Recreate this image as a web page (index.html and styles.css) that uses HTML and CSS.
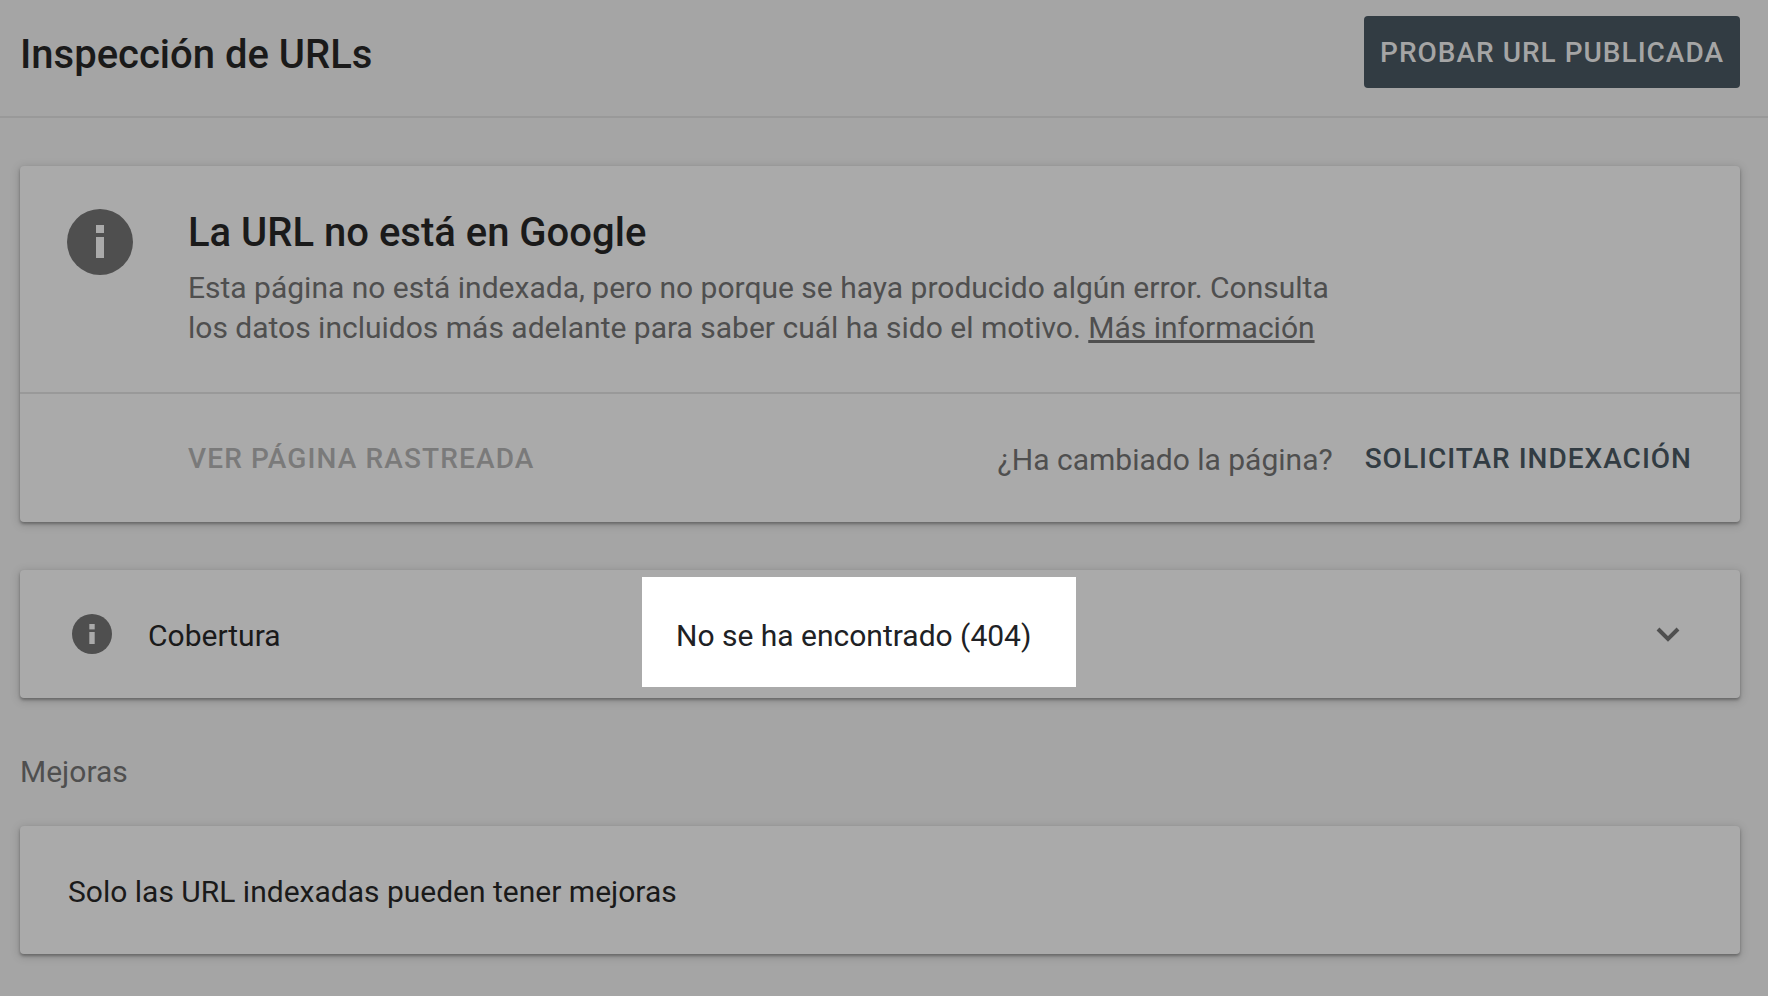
FILE: index.html
```html
<!DOCTYPE html>
<html lang="es">
<head>
<meta charset="utf-8">
<title>Inspección de URLs</title>
<link rel="stylesheet" href="styles.css">
</head>
<body>
<header class="topbar">
  <h1 class="page-title">Inspección de URLs</h1>
  <button class="primary-btn">PROBAR URL PUBLICADA</button>
</header>
<main class="content">
  <section class="card verdict">
    <div class="verdict-main">
      <svg class="icon-large" viewBox="0 0 66 66" aria-hidden="true">
        <circle cx="33" cy="33" r="33" fill="#4f4f4f"/>
        <rect x="29" y="16" width="8" height="8" fill="#aaa"/>
        <rect x="29" y="28" width="8" height="21" fill="#aaa"/>
      </svg>
      <div class="verdict-text">
        <h2 class="verdict-title">La URL no está en Google</h2>
        <p class="verdict-desc">Esta página no está indexada, pero no porque se haya producido algún error. Consulta<br>los datos incluidos más adelante para saber cuál ha sido el motivo. <a class="link" href="#">Más información</a></p>
      </div>
    </div>
    <div class="verdict-actions">
      <span class="action disabled">VER PÁGINA RASTREADA</span>
      <span class="changed">¿Ha cambiado la página?</span>
      <span class="action strong">SOLICITAR INDEXACIÓN</span>
    </div>
  </section>
  <section class="card row">
    <svg class="icon-small" viewBox="0 0 40 40" aria-hidden="true">
      <circle cx="20" cy="20" r="20" fill="#4f4f4f"/>
      <rect x="17.3" y="10" width="5.4" height="5.4" fill="#aaa"/>
      <rect x="17.3" y="18" width="5.4" height="12" fill="#aaa"/>
    </svg>
    <span class="row-label">Cobertura</span>
    <div class="highlight">No se ha encontrado (404)</div>
    <svg class="chevron" viewBox="0 0 24 16" aria-hidden="true">
      <path d="M2 3l10 10L22 3" fill="none" stroke="#4f4f4f" stroke-width="4"/>
    </svg>
  </section>
  <h3 class="section-label">Mejoras</h3>
  <section class="card note">Solo las URL indexadas pueden tener mejoras</section>
</main>
</body>
</html>
```
FILE: styles.css
```css
* { box-sizing: border-box; }
html, body { height: 100%; }
body {
  margin: 0;
  background: #a5a5a5;
  color: #1a1a1a;
  font-family: Roboto, "Noto Sans", sans-serif;
  overflow: hidden;
}
.topbar {
  height: 118px;
  display: flex;
  align-items: flex-start;
  justify-content: space-between;
  padding: 16px 28px 0 20px;
  border-bottom: 2px solid #999;
}
.page-title {
  margin: 0;
  font-size: 40px;
  font-weight: 500;
  line-height: 78px;
}
.primary-btn {
  width: 376px;
  height: 72px;
  border: 0;
  border-radius: 4px;
  background: #323c43;
  color: #a5a5a5;
  font: 500 28px Roboto, sans-serif;
  letter-spacing: 1px;
  padding: 0;
}
.content { padding: 48px 28px 0 20px; }
.card {
  background: #aaa;
  border-radius: 4px;
  box-shadow: 0 2px 3px rgba(0,0,0,.3), 0 2px 8px 2px rgba(0,0,0,.12);
}
.verdict { height: 356px; display: flex; flex-direction: column; margin-bottom: 48px; }
.verdict-main {
  height: 228px;
  display: flex;
  padding: 43px 0 0 47px;
  border-bottom: 2px solid #999;
}
.icon-large { width: 66px; height: 66px; flex: none; margin-right: 55px; }
.verdict-text { min-width: 0; }
.verdict-title {
  margin: 0;
  font-size: 40px;
  font-weight: 500;
  line-height: 48px;
}
.verdict-desc {
  margin: 11px 0 0;
  font-size: 30px;
  line-height: 40px;
  color: #4f4f4f;
}
.link { color: inherit; text-decoration: underline; }
.verdict-actions {
  flex: 1;
  display: flex;
  align-items: center;
  padding: 0 48px 0 168px;
  font-size: 28px;
}
.action { font-weight: 500; letter-spacing: 1px; }
.disabled { color: #7a7a7a; letter-spacing: 1.12px; margin-right: auto; }
.changed { font-size: 30px; color: #4f4f4f; margin-right: 32px; padding-top: 2px; }
.strong { color: #323c43; }
.row {
  height: 128px;
  display: flex;
  align-items: flex-start;
  padding: 7px 60px 0 52px;
  position: relative;
}
.icon-small { width: 40px; height: 40px; flex: none; margin: 37px 36px 0 0; }
.row-label { width: 494px; font-size: 30px; line-height: 118px; }
.highlight {
  width: 434px;
  height: 110px;
  background: #fff;
  color: #202124;
  font-size: 30px;
  line-height: 118px;
  padding-left: 34px;
}
.chevron { width: 24px; height: 16px; margin: 49px 0 0 auto; }
.section-label {
  margin: 54px 0 0;
  font-size: 30px;
  font-weight: 400;
  line-height: 40px;
  color: #4f4f4f;
}
.note {
  height: 128px;
  margin-top: 34px;
  padding: 2px 0 0 48px;
  display: flex;
  align-items: center;
  font-size: 30px;
}
```
